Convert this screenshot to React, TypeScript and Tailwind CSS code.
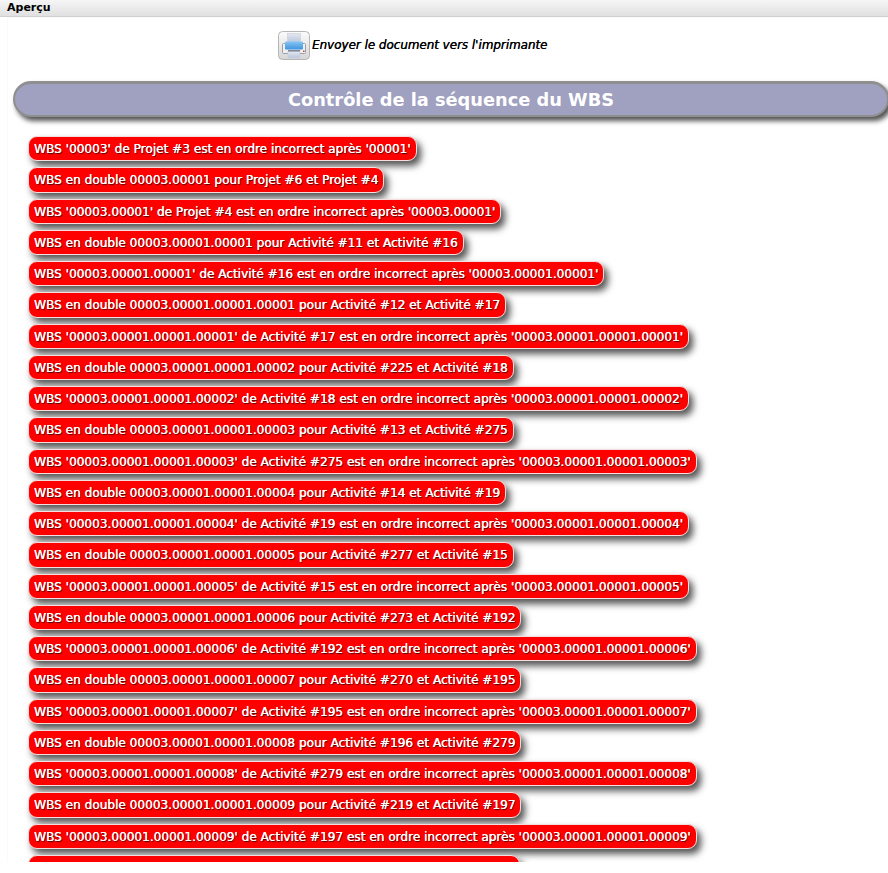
const rows = [
  "WBS '00003' de Projet #3 est en ordre incorrect après '00001'",
  "WBS en double 00003.00001 pour Projet #6 et Projet #4",
  "WBS '00003.00001' de Projet #4 est en ordre incorrect après '00003.00001'",
  "WBS en double 00003.00001.00001 pour Activité #11 et Activité #16",
  "WBS '00003.00001.00001' de Activité #16 est en ordre incorrect après '00003.00001.00001'",
  "WBS en double 00003.00001.00001.00001 pour Activité #12 et Activité #17",
  "WBS '00003.00001.00001.00001' de Activité #17 est en ordre incorrect après '00003.00001.00001.00001'",
  "WBS en double 00003.00001.00001.00002 pour Activité #225 et Activité #18",
  "WBS '00003.00001.00001.00002' de Activité #18 est en ordre incorrect après '00003.00001.00001.00002'",
  "WBS en double 00003.00001.00001.00003 pour Activité #13 et Activité #275",
  "WBS '00003.00001.00001.00003' de Activité #275 est en ordre incorrect après '00003.00001.00001.00003'",
  "WBS en double 00003.00001.00001.00004 pour Activité #14 et Activité #19",
  "WBS '00003.00001.00001.00004' de Activité #19 est en ordre incorrect après '00003.00001.00001.00004'",
  "WBS en double 00003.00001.00001.00005 pour Activité #277 et Activité #15",
  "WBS '00003.00001.00001.00005' de Activité #15 est en ordre incorrect après '00003.00001.00001.00005'",
  "WBS en double 00003.00001.00001.00006 pour Activité #273 et Activité #192",
  "WBS '00003.00001.00001.00006' de Activité #192 est en ordre incorrect après '00003.00001.00001.00006'",
  "WBS en double 00003.00001.00001.00007 pour Activité #270 et Activité #195",
  "WBS '00003.00001.00001.00007' de Activité #195 est en ordre incorrect après '00003.00001.00001.00007'",
  "WBS en double 00003.00001.00001.00008 pour Activité #196 et Activité #279",
  "WBS '00003.00001.00001.00008' de Activité #279 est en ordre incorrect après '00003.00001.00001.00008'",
  "WBS en double 00003.00001.00001.00009 pour Activité #219 et Activité #197",
  "WBS '00003.00001.00001.00009' de Activité #197 est en ordre incorrect après '00003.00001.00001.00009'",
];

function PrinterIcon() {
  return (
    <svg width="32" height="29" viewBox="0 0 32 29">
      <defs>
        <linearGradient id="box" x1="0" y1="0" x2="0" y2="1">
          <stop offset="0" stopColor="#fbfbfb" />
          <stop offset="1" stopColor="#d6d6d6" />
        </linearGradient>
        <linearGradient id="sheet" x1="0" y1="0" x2="0" y2="1">
          <stop offset="0" stopColor="#e3e7f0" />
          <stop offset="1" stopColor="#b9c6de" />
        </linearGradient>
        <linearGradient id="blue" x1="0" y1="0" x2="0" y2="1">
          <stop offset="0" stopColor="#86c6f4" />
          <stop offset="1" stopColor="#3f93de" />
        </linearGradient>
      </defs>
      <rect x="0.5" y="0.5" width="31" height="28" rx="4" fill="url(#box)" stroke="#b5b5b5" />
      <rect x="9.5" y="2.5" width="13" height="9" fill="url(#sheet)" stroke="#c9ced9" strokeWidth="0.6" />
      <rect x="4.5" y="12.5" width="23" height="10" rx="1" fill="#eef0f3" stroke="#9a9fa6" />
      <rect x="7" y="10.5" width="18" height="8" rx="1" fill="url(#blue)" />
      <rect x="10" y="20.5" width="12" height="6.5" fill="url(#sheet)" stroke="#c9ced9" strokeWidth="0.6" />
      <rect x="10" y="19" width="12" height="1.5" fill="#7d8794" />
      <rect x="25" y="19.5" width="1.5" height="1.5" fill="#d9443a" />
    </svg>
  );
}

const pill =
  "flex h-[25.25px] shrink-0 items-center whitespace-nowrap rounded-[9px] border border-[#f4dede] bg-[#ff0000] pb-0 pl-[5px] pr-[5px] pt-[1px] text-[12.1px] text-white shadow-[4px_5px_7px_#555] [text-shadow:0.3px_0_0_#fff,1px_1px_1px_#400]";

export default function App() {
  return (
    <div className="h-[873px] w-[888px] overflow-hidden bg-white font-['DejaVu_Sans',sans-serif]">
      <div className="flex h-[17px] items-center border-b border-[#d0d0d0] bg-gradient-to-b from-[#f6f6f6] to-[#e0e0e0] pl-[7px] pt-[1px] text-[11px] font-bold text-black">
        Aperçu
      </div>
      <div className="ml-[7px] h-[845px] overflow-hidden border-l border-t border-[#fafafa] pt-[13px]">
        <div className="flex items-center pl-[270px]">
          <PrinterIcon />
          <span className="ml-[2px] text-[11.9px] italic text-black [text-shadow:0.3px_0_0_#000]">Envoyer le document vers l'imprimante</span>
        </div>
        <div className="ml-[5px] mt-[21px] flex h-[36px] w-[876px] items-center justify-center rounded-[18px] border-2 border-t-[3px] border-[#8f8f8f] bg-[#a0a0c0] pt-[1px] text-[17.8px] font-bold text-white shadow-[3px_4px_5px_#555]">
          Contrôle de la séquence du WBS
        </div>
        <div className="ml-[20px] mt-[19px] flex flex-col items-start gap-[6px]">
          {rows.map((row, i) => (
            <div key={i} className={pill}>
              {row}
            </div>
          ))}
          <div className={pill + " w-[492px]"} />
        </div>
      </div>
    </div>
  );
}
